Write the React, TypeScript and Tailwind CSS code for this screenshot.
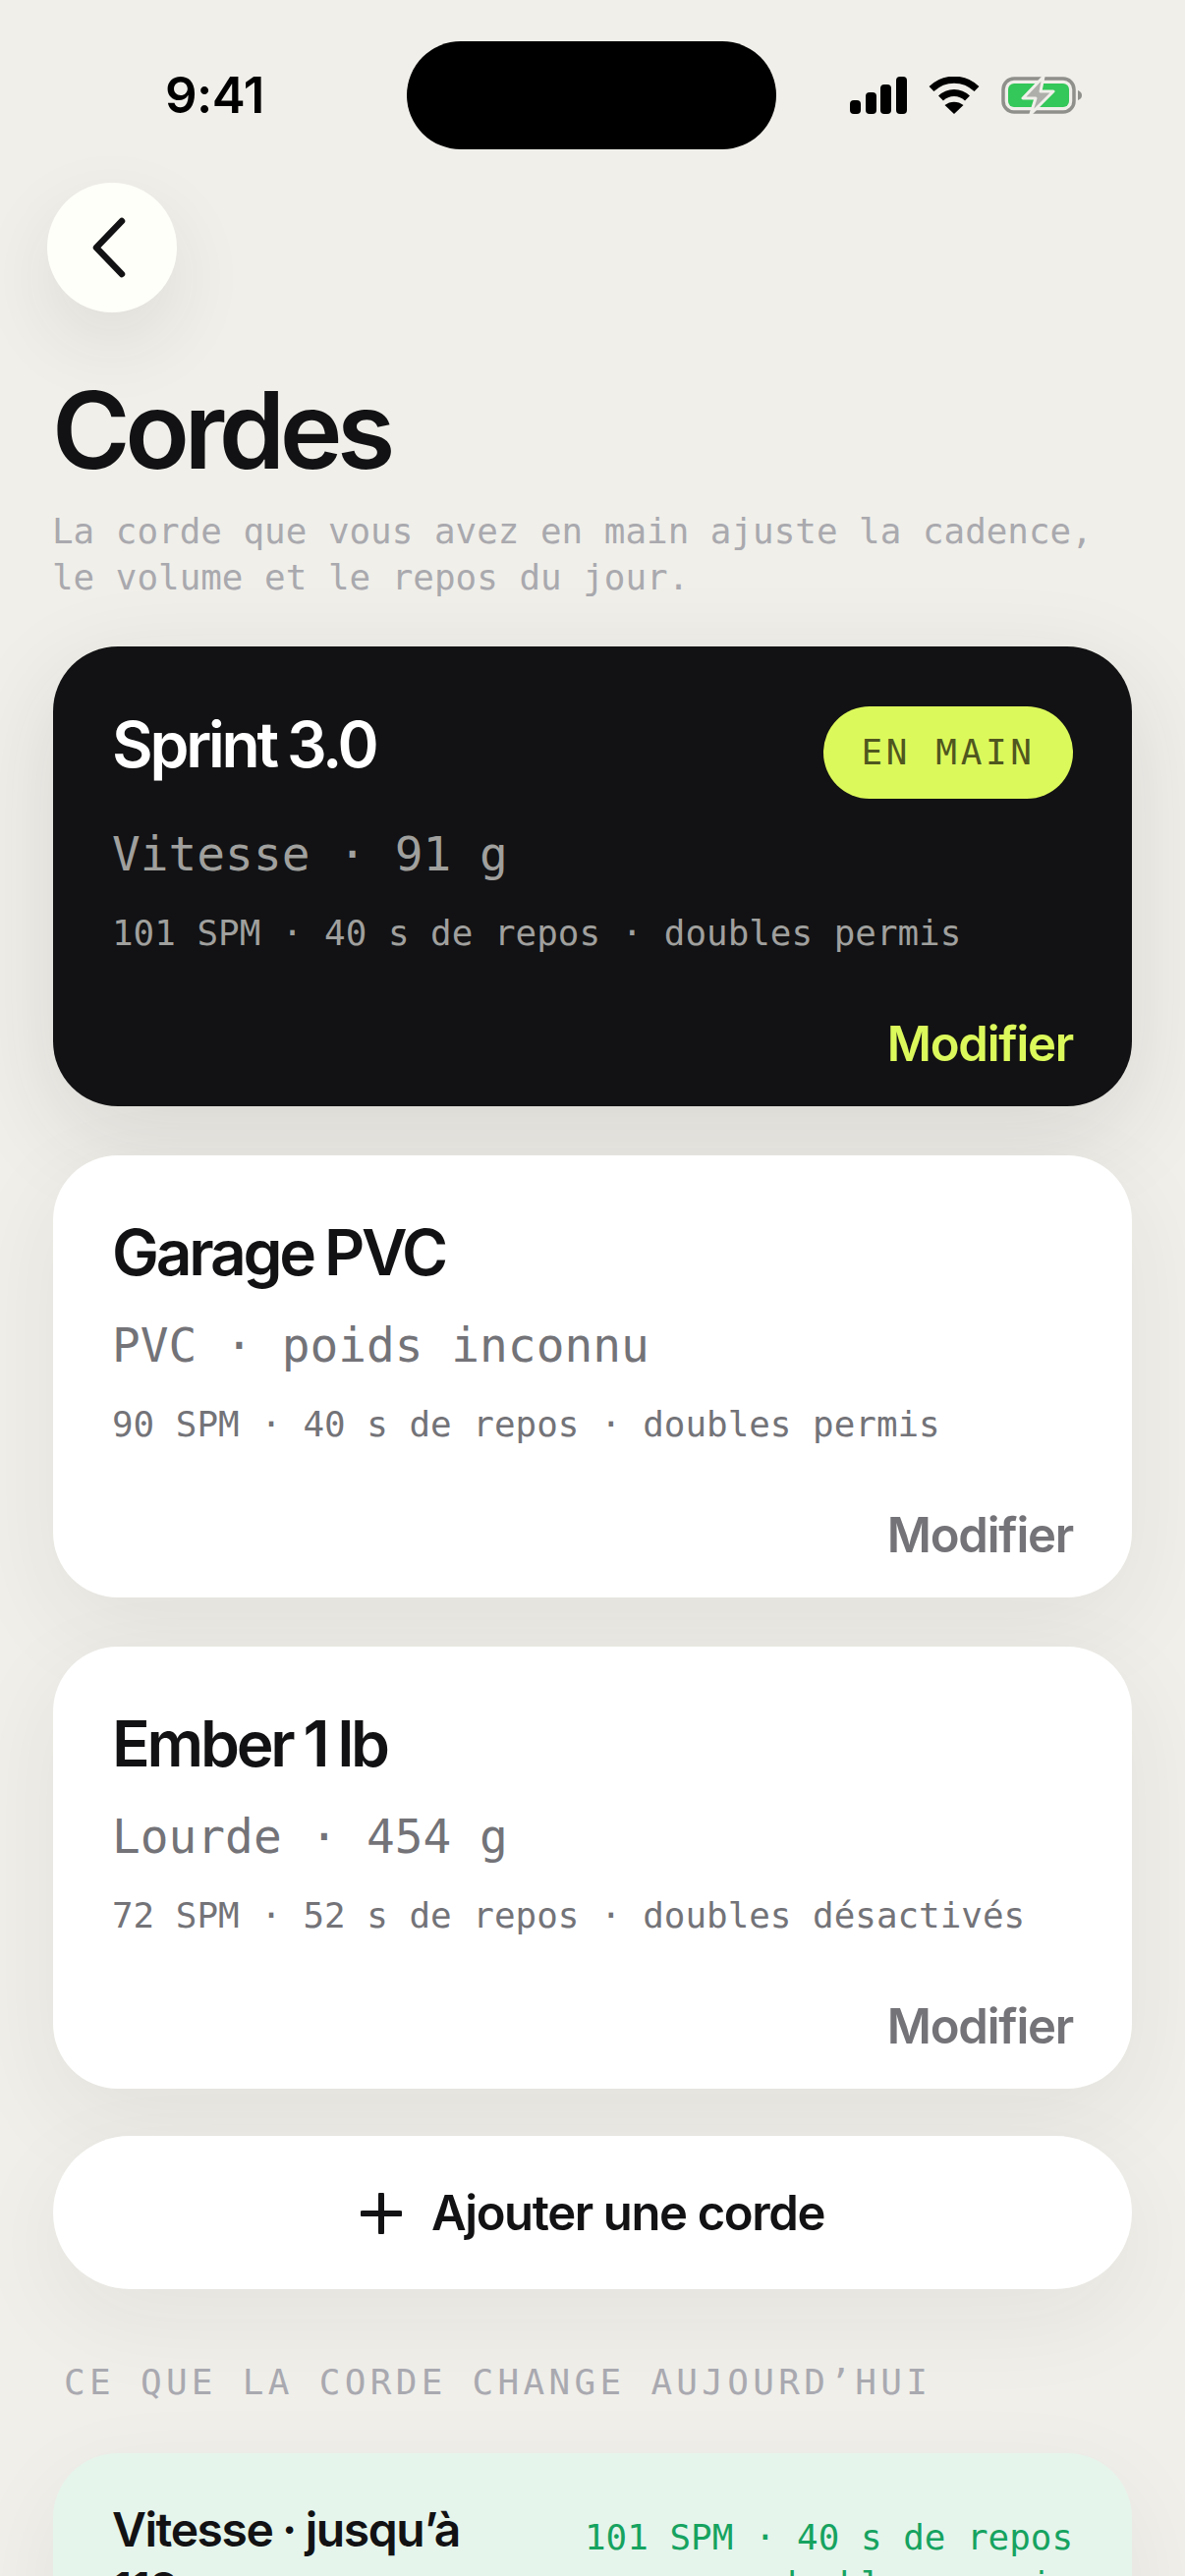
import React from "react";

const sans = "font-['Inter','Liberation_Sans',sans-serif]";
const mono = "font-['DejaVu_Sans_Mono','Liberation_Mono',monospace]";
const heading = `${sans} text-[64px] leading-[72px] font-semibold tracking-[-0.05em] [word-spacing:-0.03em]`;
const action = `${sans} text-[49px] leading-[58px] self-end font-semibold tracking-[-0.025em]`;

function Signal() {
  return (
    <svg width="58" height="38" viewBox="0 0 58 38" fill="#000">
      <rect x="0" y="24" width="11" height="14" rx="4" />
      <rect x="16" y="16" width="11" height="22" rx="4" />
      <rect x="31" y="8" width="11" height="30" rx="4" />
      <rect x="47" y="0" width="11" height="38" rx="4" />
    </svg>
  );
}

function Wifi() {
  return (
    <svg width="52" height="38" viewBox="0 0 52 38" fill="none">
      <path d="M3 12.5C16 0 36 0 49 12.5" stroke="#000" strokeWidth="7" />
      <path d="M12.5 22C20 14.500 32 14.500 39.500 22" stroke="#000" strokeWidth="7" />
      <path d="M26 38L16.500 29C22 24.500 30 24.500 35.500 29Z" fill="#000" />
    </svg>
  );
}

function Battery() {
  return (
    <svg width="82" height="40" viewBox="0 0 82 40" fill="none">
      <rect x="2" y="3" width="72" height="34" rx="11" stroke="#8f8f8b" strokeWidth="3.500" />
      <rect x="7" y="8" width="62" height="24" rx="6" fill="#34c759" />
      <path d="M78 15c3 1 4 3 4 5s-1 4-4 5z" fill="#8f8f8b" />
      <path d="M43 1L22 23H35L30 39L53 16H40Z" fill="#aeaeaa" stroke="#f0efea" strokeWidth="3" strokeLinejoin="round" />
    </svg>
  );
}

function Card({ title, sub, meta }: { title: string; sub: string; meta: string }) {
  return (
    <div className="h-[450px] rounded-[66px] bg-white shadow-[0_30px_100px_rgba(40,40,30,0.07)] px-[60px] pt-[63px] flex flex-col">
      <div className={`${heading} text-[#121214]`}>{title}</div>
      <div className={`${mono} text-[47.800px] leading-[58px] mt-[30px] text-[#737378]`}>{sub}</div>
      <div className={`${mono} text-[35.900px] leading-[46px] mt-[28px] text-[#737378]`}>{meta}</div>
      <div className={`${action} mt-[61px] text-[#737378]`}>Modifier</div>
    </div>
  );
}

export default function App() {
  return (
    <div className="h-[2622px] w-[1206px] overflow-hidden bg-[#f0efea]">
      <div className="h-[186px] pt-[42px] flex items-start">
        <div className={`${sans} ml-[168px] w-[246px] text-[51px] leading-[110px] font-semibold text-black tracking-[-0.01em]`}>9:41</div>
        <div className="h-[110px] w-[376px] rounded-[55px] bg-black" />
        <div className="ml-[75px] h-[110px] flex items-center gap-[22px]">
          <Signal />
          <Wifi />
          <Battery />
        </div>
      </div>

      <div className="px-[54px]">
        <div className="-ml-[6px] h-[132px] w-[132px] rounded-full bg-[#fffff9] shadow-[0_30px_80px_rgba(40,40,30,0.09)] flex items-center justify-center">
          <svg width="44" height="64" viewBox="0 0 44 64" fill="none" className="-ml-[6px]">
            <path d="M35 5L9 32L35 59" stroke="#121214" strokeWidth="6.500" strokeLinecap="round" strokeLinejoin="round" />
          </svg>
        </div>

        <h1 className={`${sans} mt-[60px] -ml-[1px] text-[108px] leading-[120px] font-semibold tracking-[-0.05em] text-[#121214]`}>Cordes</h1>
        <p className={`${mono} mt-[19px] -ml-[1px] text-[35.900px] leading-[47px] text-[#a9a9ae]`}>
          La corde que vous avez en main ajuste la cadence,
          <br />
          le volume et le repos du jour.
        </p>

        <div className="mt-[47px] flex flex-col gap-[50px]">
          <div className="h-[468px] rounded-[66px] bg-[#121214] shadow-[0_30px_100px_rgba(40,40,30,0.12)] px-[60px] pt-[61px] flex flex-col">
            <div className="flex items-start justify-between">
              <div className={`${heading} pt-[3px] text-white`}>Sprint 3.0</div>
              <div className={`${mono} h-[94px] w-[254px] rounded-full bg-[#dcf95b] flex items-center justify-center text-[36px] tracking-[3.6px] text-[#50571f]`}>EN MAIN</div>
            </div>
            <div className={`${mono} text-[47.800px] leading-[58px] mt-[28px] text-[#a0a09e]`}>Vitesse · 91 g</div>
            <div className={`${mono} text-[35.900px] leading-[46px] mt-[28px] text-[#a0a09e]`}>101 SPM · 40 s de repos · doubles permis</div>
            <div className={`${action} mt-[61px] text-[#dcf95b]`}>Modifier</div>
          </div>
          <Card title="Garage PVC" sub="PVC · poids inconnu" meta="90 SPM · 40 s de repos · doubles permis" />
          <Card title="Ember 1 lb" sub="Lourde · 454 g" meta="72 SPM · 52 s de repos · doubles désactivés" />
          <div className="-mt-[2px] h-[156px] pt-[2px] rounded-full bg-white shadow-[0_30px_100px_rgba(40,40,30,0.06)] flex items-center justify-center gap-[30px]">
            <svg width="42" height="42" viewBox="0 0 42 42" fill="none">
              <path d="M21 2V40M2 21H40" stroke="#121214" strokeWidth="6" strokeLinecap="round" />
            </svg>
            <span className={`${sans} text-[49px] font-semibold tracking-[-0.028em] text-[#121214]`}>Ajouter une corde</span>
          </div>
        </div>

        <div className={`${mono} mt-[72px] ml-[11px] text-[36px] leading-[46px] tracking-[4.3px] text-[#a9a9b0]`}>CE QUE LA CORDE CHANGE AUJOURD’HUI</div>

        <div className="mt-[49px] rounded-[66px] bg-[#e5f5ec] shadow-[0_30px_100px_rgba(40,40,30,0.06)] px-[60px] pt-[47px] pb-[60px] flex items-start justify-between gap-[40px]">
          <div className={`${sans} w-[380px] text-[48px] leading-[61px] font-semibold tracking-[-0.03em] [word-spacing:-0.02em] text-[#121214]`}>Vitesse · jusqu’à 112</div>
          <div className={`${mono} pt-[15px] text-right text-[35.900px] leading-[48px] text-[#16a360]`}>
            101 SPM · 40 s de repos
            <br />
            doubles permis
          </div>
        </div>
      </div>
    </div>
  );
}
